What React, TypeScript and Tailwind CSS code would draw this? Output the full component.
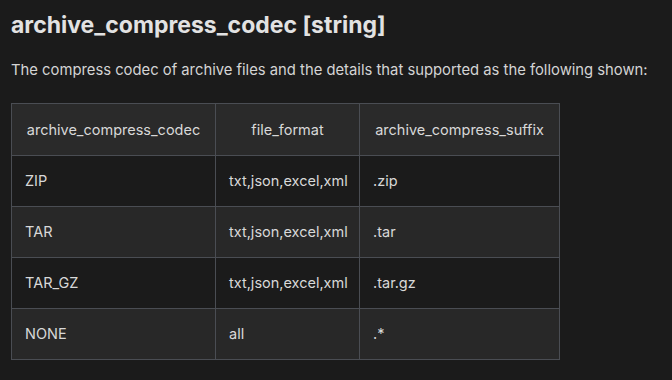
import React from "react";

const rows = [
  ["ZIP", "txt,json,excel,xml", ".zip"],
  ["TAR", "txt,json,excel,xml", ".tar"],
  ["TAR_GZ", "txt,json,excel,xml", ".tar.gz"],
  ["NONE", "all", ".*"],
];

export default function App() {
  return (
    <div
      className="w-[672px] h-[380px] bg-[#1b1b1b] text-[#dcdcdc] px-[11px] overflow-hidden"
      style={{ fontFamily: "Inter, 'Noto Sans', sans-serif" }}
    >
      <h1 className="pt-[9px] text-[23px] leading-[32px] font-bold text-[#e2e2e2]">
        archive_compress_codec [string]
      </h1>
      <p className="mt-[19px] text-[14.8px] leading-[20px] text-[#d4d4d4]">
        The compress codec of archive files and the details that supported as the following shown:
      </p>
      <table className="mt-[23px] border-collapse table-fixed w-[548px] text-[14.5px] text-[#d8d8d8]">
        <thead>
          <tr className="bg-[#2a2a2a] h-[52px]">
            <th className="w-[204px] border border-[#4a4d53] font-normal text-center px-[12px]">archive_compress_codec</th>
            <th className="w-[144px] border border-[#4a4d53] font-normal text-center px-[12px]">file_format</th>
            <th className="w-[200px] border border-[#4a4d53] font-normal text-center px-[12px]">archive_compress_suffix</th>
          </tr>
        </thead>
        <tbody>
          {rows.map((r, i) => (
            <tr key={i} className={`h-[51px] ${i % 2 === 1 ? "bg-[#282828]" : "bg-[#1b1b1b]"}`}>
              {r.map((c, j) => (
                <td key={j} className="border border-[#4a4d53] px-[13px] text-left whitespace-nowrap">
                  {c}
                </td>
              ))}
            </tr>
          ))}
        </tbody>
      </table>
    </div>
  );
}
